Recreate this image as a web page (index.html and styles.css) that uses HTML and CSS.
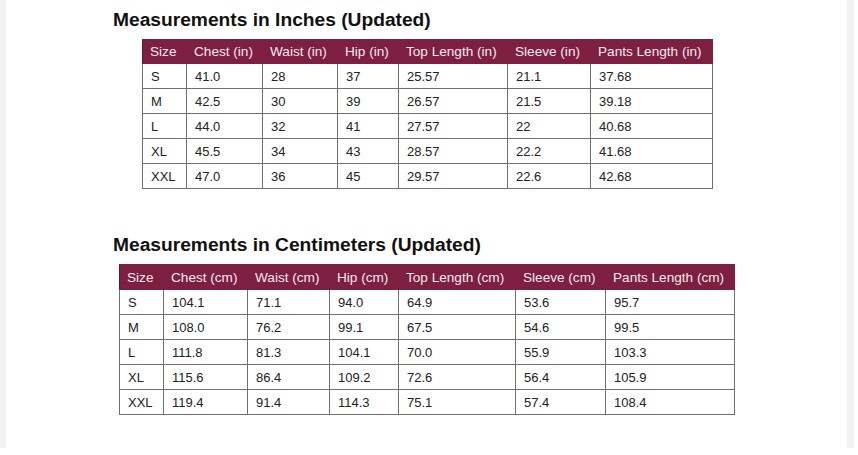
FILE: index.html
```html
<!DOCTYPE html>
<html lang="en">
<head>
<meta charset="utf-8">
<title>Measurements</title>
<link rel="stylesheet" href="styles.css">
</head>
<body>
<div class="page">
  <section class="block block-in">
    <h2 class="title">Measurements in Inches (Updated)</h2>
    <table class="chart chart-in">
      <colgroup>
        <col class="w-size"><col class="w-chest"><col class="w-waist"><col class="w-hip"><col class="w-top"><col class="w-sleeve"><col class="w-pants">
      </colgroup>
      <thead>
        <tr><th>Size</th><th>Chest (in)</th><th>Waist (in)</th><th>Hip (in)</th><th>Top Length (in)</th><th>Sleeve (in)</th><th>Pants Length (in)</th></tr>
      </thead>
      <tbody>
        <tr><td>S</td><td>41.0</td><td>28</td><td>37</td><td>25.57</td><td>21.1</td><td>37.68</td></tr>
        <tr><td>M</td><td>42.5</td><td>30</td><td>39</td><td>26.57</td><td>21.5</td><td>39.18</td></tr>
        <tr><td>L</td><td>44.0</td><td>32</td><td>41</td><td>27.57</td><td>22</td><td>40.68</td></tr>
        <tr><td>XL</td><td>45.5</td><td>34</td><td>43</td><td>28.57</td><td>22.2</td><td>41.68</td></tr>
        <tr><td>XXL</td><td>47.0</td><td>36</td><td>45</td><td>29.57</td><td>22.6</td><td>42.68</td></tr>
      </tbody>
    </table>
  </section>
  <section class="block block-cm">
    <h2 class="title">Measurements in Centimeters (Updated)</h2>
    <table class="chart chart-cm">
      <colgroup>
        <col class="w-size"><col class="w-chest"><col class="w-waist"><col class="w-hip"><col class="w-top"><col class="w-sleeve"><col class="w-pants">
      </colgroup>
      <thead>
        <tr><th>Size</th><th>Chest (cm)</th><th>Waist (cm)</th><th>Hip (cm)</th><th>Top Length (cm)</th><th>Sleeve (cm)</th><th>Pants Length (cm)</th></tr>
      </thead>
      <tbody>
        <tr><td>S</td><td>104.1</td><td>71.1</td><td>94.0</td><td>64.9</td><td>53.6</td><td>95.7</td></tr>
        <tr><td>M</td><td>108.0</td><td>76.2</td><td>99.1</td><td>67.5</td><td>54.6</td><td>99.5</td></tr>
        <tr><td>L</td><td>111.8</td><td>81.3</td><td>104.1</td><td>70.0</td><td>55.9</td><td>103.3</td></tr>
        <tr><td>XL</td><td>115.6</td><td>86.4</td><td>109.2</td><td>72.6</td><td>56.4</td><td>105.9</td></tr>
        <tr><td>XXL</td><td>119.4</td><td>91.4</td><td>114.3</td><td>75.1</td><td>57.4</td><td>108.4</td></tr>
      </tbody>
    </table>
  </section>
</div>
</body>
</html>
```
FILE: styles.css
```css
html, body {
  margin: 0;
  padding: 0;
  background: #ffffff;
}
body {
  font-family: "Liberation Sans", Arial, sans-serif;
  color: #1e1e1e;
}
.page {
  width: 841px;
  height: 448px;
  border-left: 6px solid #f1f1f1;
  border-right: 7px solid #f1f1f1;
  box-sizing: content-box;
}
.block {
  padding-left: 107px;
}
.block-in {
  padding-top: 9px;
}
.block-cm {
  padding-top: 45px;
}
.title {
  margin: 0 0 8px 0;
  font-size: 19.2px;
  line-height: 22px;
  font-weight: bold;
  color: #111111;
  letter-spacing: 0;
}
.chart {
  border-collapse: collapse;
  table-layout: fixed;
  font-size: 13px;
  line-height: 15px;
}
.chart-in {
  margin-left: 29px;
  width: 570px;
}
.chart-cm {
  margin-left: 6px;
  width: 615px;
}
.chart th,
.chart td {
  border: 1px solid #707070;
  padding: 0 0 0 8px;
  height: 25px;
  text-align: left;
  white-space: nowrap;
  box-sizing: border-box;
}
.chart th {
  background: #7c1f40;
  color: #f6e9ee;
  font-weight: normal;
  font-size: 13.6px;
  border-color: #7c1f40;
  border-left-color: #5e1530;
  padding-left: 7px;
}
.chart-in th {
  height: 24px;
}
.chart td {
  color: #222222;
}
.chart-in .w-size { width: 44px; }
.chart-in .w-chest { width: 76px; }
.chart-in .w-waist { width: 75px; }
.chart-in .w-hip { width: 61px; }
.chart-in .w-top { width: 109px; }
.chart-in .w-sleeve { width: 83px; }
.chart-in .w-pants { width: 122px; }
.chart-cm .w-size { width: 44px; }
.chart-cm .w-chest { width: 84px; }
.chart-cm .w-waist { width: 82px; }
.chart-cm .w-hip { width: 69px; }
.chart-cm .w-top { width: 117px; }
.chart-cm .w-sleeve { width: 90px; }
.chart-cm .w-pants { width: 129px; }
```
